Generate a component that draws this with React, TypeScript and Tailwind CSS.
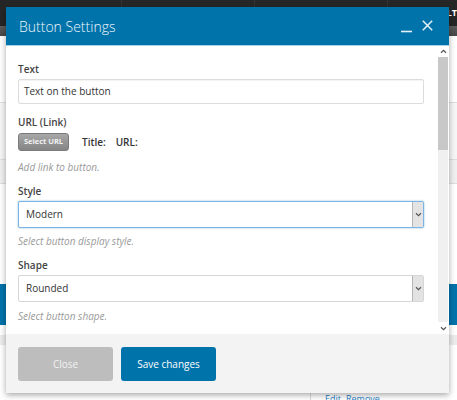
import { ReactNode } from 'react';

const Chevron = ({ up = false }: { up?: boolean }) => (
  <svg width="7" height="5" viewBox="0 0 7 5" className={up ? 'rotate-180' : ''}>
    <path d="M1 1.2 L3.5 3.6 L6 1.2" fill="none" stroke="#555" strokeWidth="1.2" />
  </svg>
);

const Label = ({ children }: { children: ReactNode }) => (
  <div className="text-[10px] leading-[15px] font-semibold text-[#444]">{children}</div>
);

const Help = ({ children }: { children: ReactNode }) => (
  <div className="text-[10px] leading-[15px] italic text-[#9a9a9a]">{children}</div>
);

const Select = ({ value, focused = false }: { value: string; focused?: boolean }) => (
  <div
    className={
      focused
        ? 'flex h-[27px] w-full rounded-[2px] border border-[#7fb2e5] bg-white shadow-[0_0_2px_rgba(30,140,190,0.6)]'
        : 'flex h-[27px] w-full rounded-[2px] border border-[#d6d6d6] bg-white'
    }
  >
    <div className="flex flex-1 items-center pl-[7px] text-[10px] text-[#333]">{value}</div>
    <div className="flex w-[11px] items-center justify-center border-l border-[#b5b5b5] bg-[#e3e3e3]">
      <Chevron />
    </div>
  </div>
);

const App = () => {
  return (
    <div className="relative h-[400px] w-[457px] overflow-hidden bg-white font-['Open_Sans',sans-serif]">
      {/* 배경: 상단 바 */}
      <div className="flex h-[26px] bg-[#262626]">
        <div className="w-[122px] border-r border-[#333]" />
        <div className="w-[133px] border-r border-[#333]" />
        <div className="w-[133px] border-r border-[#333]" />
        <div className="flex flex-1 items-start justify-end pt-[6px] text-[9px] font-bold text-white">ALT</div>
      </div>
      <div className="h-[10px] bg-gradient-to-b from-[#5c5c5c] to-[#474747]" />

      {/* 배경: 페이지 */}
      <div className="h-[66px] bg-white" />
      <div className="h-[57px] border-t border-[#dedede] bg-[#f6f6f6]" />
      <div className="h-[25px] border-y border-[#dedede] bg-[#f0f0f0]" />
      <div className="h-[100px] bg-white" />
      <div className="h-[41px] bg-[#0073aa]" />
      <div className="h-[10px] bg-white" />
      <div className="h-[10px] bg-[#ececec]" />
      <div className="flex h-[55px] bg-white">
        <div className="ml-[310px] mt-[46px] h-[9px] border-l border-[#dcdcdc]" />
        <div className="ml-[14px] mt-[48px] flex gap-[5px] text-[9px] leading-[12px] text-[#2a7fc4]">
          <span>Edit</span>
          <span>Remove</span>
        </div>
      </div>

      {/* 다이얼로그 */}
      <div className="absolute left-[6px] top-[7px] flex h-[386px] w-[443px] flex-col shadow-[0_2px_6px_rgba(0,0,0,0.35)]">
        {/* 헤더 */}
        <div className="flex h-[38px] items-center bg-[#0073aa] pl-[13px] pr-[16px]">
          <span className="flex-1 text-[14px] font-light text-[#eef6fb]">Button Settings</span>
          <svg width="12" height="12" viewBox="0 0 12 12" className="mr-[9px] mt-[2px]">
            <path d="M0 10.5 H11" stroke="#e6f1f8" strokeWidth="1.6" />
          </svg>
          <svg width="11" height="11" viewBox="0 0 11 11" className="mt-[-1px]">
            <path d="M0.8 0.8 L10.2 10.2 M10.2 0.8 L0.8 10.2" stroke="#e6f1f8" strokeWidth="1.5" />
          </svg>
        </div>
        <div className="h-[1px] bg-[#a9d2e8]" />

        {/* 본문 */}
        <div className="flex h-[288px] bg-white">
          <div className="w-[432px] overflow-hidden pl-[12px] pr-[14px] pt-[16px]">
            <Label>Text</Label>
            <div className="mt-[2px] flex h-[25px] items-center rounded-[2px] border border-[#dcdcdc] pl-[5px] text-[10px] text-[#333] shadow-[inset_0_1px_1px_rgba(0,0,0,0.05)]">
              Text on the button
            </div>

            <div className="mt-[11px]">
              <Label>URL (Link)</Label>
            </div>
            <div className="mt-[3px] flex items-center">
              <div className="flex h-[18px] w-[51px] items-center justify-center rounded-[3px] border border-[#7a7a7a] bg-gradient-to-b from-[#a8a8a8] to-[#858585] text-[7.5px] font-bold text-[#f2f2f2]">
                Select URL
              </div>
              <span className="ml-[13px] text-[10px] font-semibold text-[#333]">Title:</span>
              <span className="ml-[10px] text-[10px] font-semibold text-[#333]">URL:</span>
            </div>
            <div className="mt-[9px]">
              <Help>Add link to button.</Help>
            </div>

            <div className="mt-[9px]">
              <Label>Style</Label>
            </div>
            <div className="mt-[2px]">
              <Select value="Modern" focused />
            </div>
            <div className="mt-[6px]">
              <Help>Select button display style.</Help>
            </div>

            <div className="mt-[9px]">
              <Label>Shape</Label>
            </div>
            <div className="mt-[2px]">
              <Select value="Rounded" />
            </div>
            <div className="mt-[7px]">
              <Help>Select button shape.</Help>
            </div>
          </div>

          {/* 스크롤바 */}
          <div className="mr-[1px] flex w-[10px] flex-col bg-[#f0f0f0]">
            <div className="flex h-[11px] items-center justify-center bg-white">
              <Chevron up />
            </div>
            <div className="h-[93px] bg-[#c8c8c8]" />
            <div className="flex-1" />
            <div className="flex h-[12px] items-center justify-center bg-white">
              <Chevron />
            </div>
          </div>
        </div>

        {/* 푸터 */}
        <div className="flex flex-1 gap-[8px] bg-[#f3f3f3] pl-[12px] pt-[13px]">
          <div className="flex h-[34px] w-[95px] items-center justify-center rounded-[3px] bg-[#bdbdbd] text-[10px] text-[#f2f2f2]">
            Close
          </div>
          <div className="flex h-[34px] w-[95px] items-center justify-center rounded-[3px] bg-[#0073aa] text-[10px] text-white">
            Save changes
          </div>
        </div>
      </div>
    </div>
  );
};

export default App;
